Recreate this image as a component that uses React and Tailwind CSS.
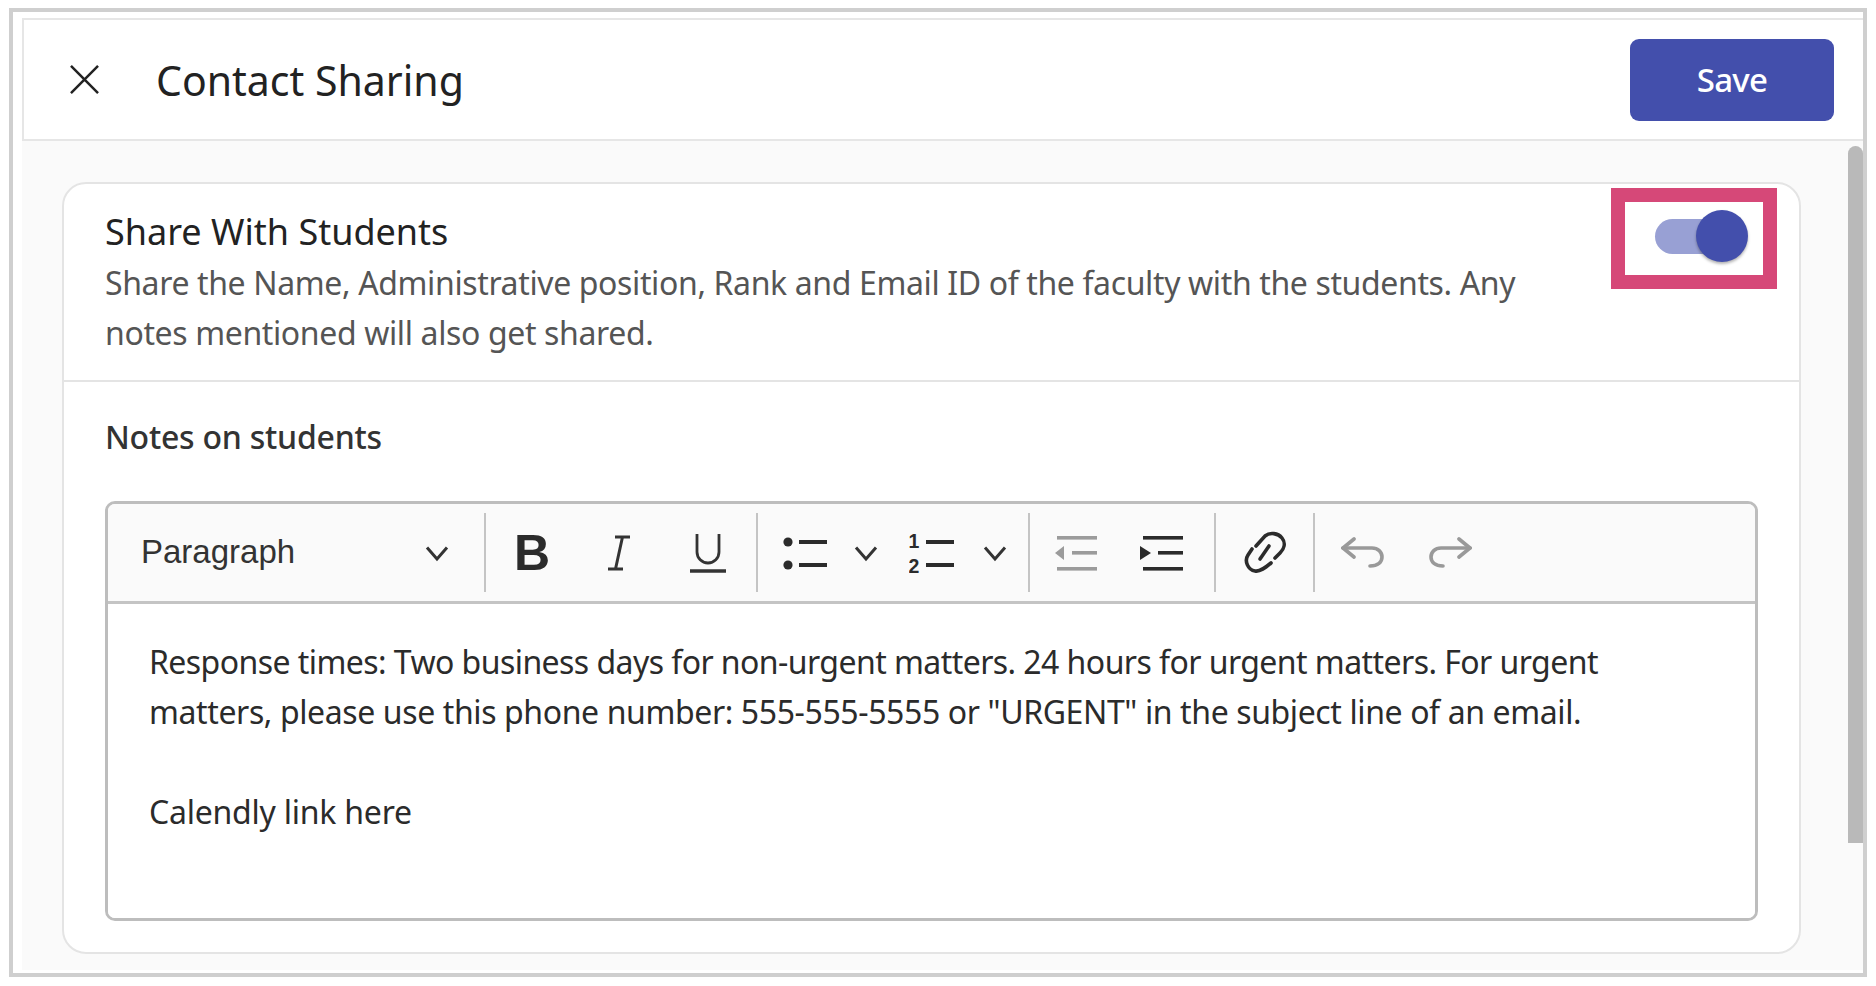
import React from "react";

const sans = "font-['Noto_Sans','Open_Sans',sans-serif]";

function Chevron({ className = "" }) {
  return (
    <svg className={className} width="24" height="24" viewBox="0 0 24 24" fill="none" stroke="#333" strokeWidth="3">
      <path d="M2 6.5L12 18 22 6.5" />
    </svg>
  );
}

function Slot({ w, children }) {
  return <div className="flex items-center justify-center h-full shrink-0" style={{ width: w }}>{children}</div>;
}

function Sep() {
  return <div className="w-[2px] h-[79px] bg-[#c4c4c4] shrink-0" />;
}

export default function App() {
  return (
    <div className={`w-[1876px] h-[986px] bg-white pt-[8px] pl-[9px] ${sans}`}>
      <div className="w-[1858px] h-[969px] border-[4px] border-[#cfcfcf] bg-white pt-[6px] pl-[9px] flex flex-col">
        <header className="h-[123px] shrink-0 border-2 border-r-0 border-[#e6e6e6] bg-white flex items-center pl-[46px] pr-[29px]">
          <svg width="29" height="29" viewBox="0 0 30 30" fill="none" stroke="#222" strokeWidth="2.6" className="shrink-0">
            <path d="M1 1l28 28M29 1L1 29" />
          </svg>
          <h1 className="ml-[57px] mt-[1px] text-[41px] leading-[50px] text-[#222] font-normal flex-1">Contact Sharing</h1>
          <button className="w-[204px] h-[82px] bg-[#434fac] text-white rounded-[9px] text-[33px] font-medium tracking-[-0.7px]">Save</button>
        </header>
        <div className="flex-1 bg-[#fafafa] flex mb-[3px]">
          <div className="flex-1 pl-[40px] pt-[41px]">
            <section className="w-[1739px] h-[772px] bg-white border-2 border-[#e4e4e4] rounded-[24px]">
              <div className="h-[198px] border-b-2 border-[#e4e4e4] pl-[41px] pr-[22px] pt-[23px] flex items-start">
                <div className="w-[1440px]">
                  <h2 className="text-[36px] leading-[50px] font-normal text-[#222]">Share With Students</h2>
                  <p className="mt-[1px] text-[32px] leading-[50px] text-[#555] tracking-[-0.37px]">
                    Share the Name, Administrative position, Rank and Email ID of the faculty with the students. Any notes mentioned will also get shared.
                  </p>
                </div>
                <div className="ml-auto -mt-[19px] w-[166px] h-[101px] border-[14px] border-[#d64878] flex items-center pl-[30px] pb-[5px] bg-white">
                  <div className="relative w-[84px] h-[35px] rounded-full bg-[#98a0d4]">
                    <div className="absolute -right-[9px] -top-[8.5px] w-[52px] h-[52px] rounded-full bg-[#434fac] shadow-[0_2px_3px_rgba(0,0,0,0.3)]" />
                  </div>
                </div>
              </div>
              <div className="pl-[41px] pt-[30px]">
                <h3 className="text-[32px] leading-[50px] font-medium text-[#333] tracking-[-0.23px]">Notes on students</h3>
                <div className="mt-[39px] w-[1653px] h-[420px] border-[3px] border-[#bdbdbd] rounded-[10px] flex flex-col overflow-hidden">
                  <div className="h-[100px] shrink-0 bg-[#fafafa] border-b-[3px] border-[#c4c4c4] flex items-center">
                    <div className="w-[376px] h-full shrink-0 flex items-center pl-[33px] pr-[35px] justify-between">
                      <span className="font-['Liberation_Sans',Arial,sans-serif] text-[33px] text-[#333] -mt-[2px]">Paragraph</span>
                      <Chevron />
                    </div>
                    <Sep />
                    <Slot w={92}>
                      <span className="font-['Liberation_Sans',Arial,sans-serif] font-bold text-[50px] leading-none text-[#2b2b2b]">B</span>
                    </Slot>
                    <Slot w={82}>
                      <svg width="26" height="36" viewBox="0 0 26 36" fill="none" stroke="#333" strokeWidth="3">
                        <path d="M9 2h15M2 34h15M16.5 2L9.5 34" />
                      </svg>
                    </Slot>
                    <Slot w={96}>
                      <svg width="38" height="40" viewBox="0 0 38 40" fill="none" stroke="#333">
                        <path d="M8 1v18a11 11 0 0 0 22 0V1" strokeWidth="2.8" />
                        <path d="M1 38h36" strokeWidth="3.4" />
                      </svg>
                    </Slot>
                    <Sep />
                    <Slot w={92}>
                      <svg width="46" height="34" viewBox="0 0 46 34" fill="#2b2b2b">
                        <circle cx="7" cy="6" r="4.6" />
                        <circle cx="7" cy="29" r="4.6" />
                        <rect x="18" y="4" width="28" height="4" />
                        <rect x="18" y="27" width="28" height="4" />
                      </svg>
                    </Slot>
                    <Slot w={32}><Chevron /></Slot>
                    <Slot w={100}>
                      <svg width="46" height="46" viewBox="0 0 46 46" fill="#2b2b2b">
                        <text x="5" y="18" textAnchor="middle" fontFamily="'Liberation Sans',Arial,sans-serif" fontWeight="700" fontSize="19.5">1</text>
                        <text x="5" y="43" textAnchor="middle" fontFamily="'Liberation Sans',Arial,sans-serif" fontWeight="700" fontSize="19.5">2</text>
                        <rect x="17" y="10" width="28" height="4" />
                        <rect x="17" y="33" width="28" height="4" />
                      </svg>
                    </Slot>
                    <Slot w={26}><Chevron /></Slot>
                    <div className="w-[20px] shrink-0" />
                    <Sep />
                    <Slot w={92}>
                      <svg width="44" height="38" viewBox="0 0 44 38" fill="#9b9b9b">
                        <rect x="3" y="2" width="40" height="3.6" />
                        <rect x="18" y="17" width="25" height="3.6" />
                        <rect x="3" y="33" width="40" height="3.6" />
                        <path d="M1 19l9-7v14z" />
                      </svg>
                    </Slot>
                    <Slot w={80}>
                      <svg width="46" height="38" viewBox="0 0 46 38" fill="#2b2b2b">
                        <rect x="4" y="2" width="40" height="3.6" />
                        <rect x="19" y="17" width="25" height="3.6" />
                        <rect x="4" y="33" width="40" height="3.6" />
                        <path d="M12 19L1 12v14z" />
                      </svg>
                    </Slot>
                    <div className="w-[12px] shrink-0" />
                    <Sep />
                    <Slot w={97}>
                      <svg width="70" height="64" viewBox="0 0 70 64" fill="none" stroke="#2b2b2b" strokeWidth="3.6" strokeLinecap="round">
                        <path d="M26 25L35 15C40 11 48 12 52 17C56 22 54 28 50 32L45 37" />
                        <path d="M22 28L18 34C14 40 18 49 25 50C30 51 35 47 41 42" />
                        <path d="M30 38L39 25" />
                      </svg>
                    </Slot>
                    <Sep />
                    <Slot w={95}>
                      <svg width="44" height="31" viewBox="0 0 44 31" fill="none" stroke="#999" strokeWidth="3.6" strokeLinecap="round">
                        <path d="M13 2L2 11l11 9" />
                        <path d="M2 11h29c6 0 10 4 10 9s-4 9-12 9" />
                      </svg>
                    </Slot>
                    <Slot w={80}>
                      <svg width="44" height="31" viewBox="0 0 44 31" fill="none" stroke="#999" strokeWidth="3.6" strokeLinecap="round">
                        <path d="M31 2l11 9-11 9" />
                        <path d="M42 11H13C7 11 3 15 3 20s4 9 12 9" />
                      </svg>
                    </Slot>
                  </div>
                  <div className="flex-1 bg-white pl-[41px] pt-[33px] text-[32px] leading-[50px] text-[#2b2b2b]">
                    <p className="tracking-[-0.56px]">Response times: Two business days for non-urgent matters. 24 hours for urgent matters. For urgent</p>
                    <p className="tracking-[-0.39px]">matters, please use this phone number: 555-555-5555 or "URGENT" in the subject line of an email.</p>
                    <p className="mt-[50px] tracking-[-0.23px]">Calendly link here</p>
                  </div>
                </div>
              </div>
            </section>
          </div>
          <div className="w-[15px] shrink-0 pt-[5px]">
            <div className="w-[15px] h-[697px] bg-[#b9b9b9] rounded-t-full" />
          </div>
        </div>
      </div>
    </div>
  );
}
